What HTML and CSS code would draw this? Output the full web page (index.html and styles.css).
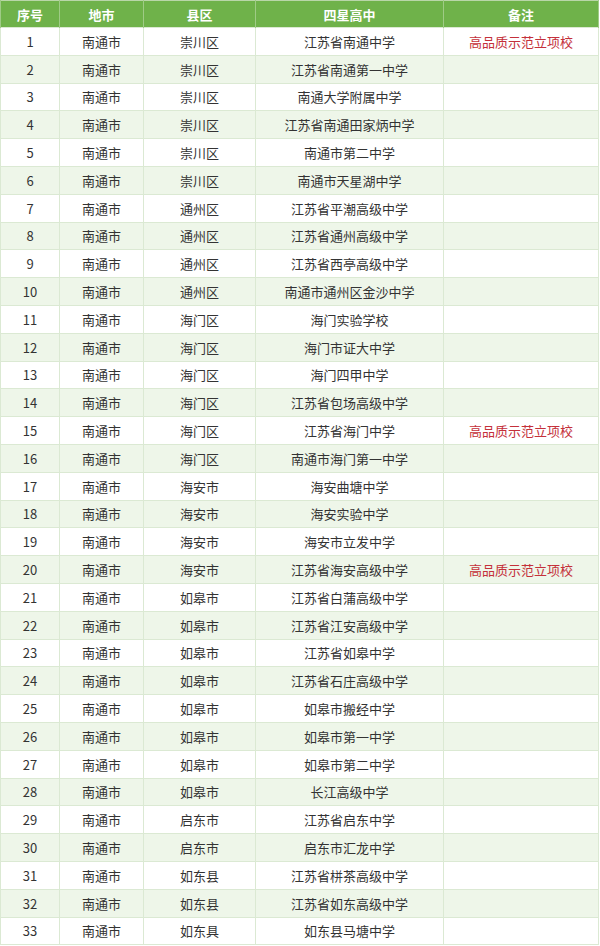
FILE: index.html
```html
<!DOCTYPE html>
<html lang="zh">
<head>
<meta charset="utf-8">
<link rel="stylesheet" href="styles.css">
</head>
<body>
<table class="schools">
<colgroup><col class="c1"><col class="c2"><col class="c3"><col class="c4"><col class="c5"></colgroup>
<thead><tr><th>序号</th><th>地市</th><th>县区</th><th>四星高中</th><th>备注</th></tr></thead>
<tbody>
<tr><td>1</td><td>南通市</td><td>崇川区</td><td>江苏省南通中学</td><td class="note">高品质示范立项校</td></tr>
<tr><td>2</td><td>南通市</td><td>崇川区</td><td>江苏省南通第一中学</td><td></td></tr>
<tr><td>3</td><td>南通市</td><td>崇川区</td><td>南通大学附属中学</td><td></td></tr>
<tr><td>4</td><td>南通市</td><td>崇川区</td><td>江苏省南通田家炳中学</td><td></td></tr>
<tr><td>5</td><td>南通市</td><td>崇川区</td><td>南通市第二中学</td><td></td></tr>
<tr><td>6</td><td>南通市</td><td>崇川区</td><td>南通市天星湖中学</td><td></td></tr>
<tr><td>7</td><td>南通市</td><td>通州区</td><td>江苏省平潮高级中学</td><td></td></tr>
<tr><td>8</td><td>南通市</td><td>通州区</td><td>江苏省通州高级中学</td><td></td></tr>
<tr><td>9</td><td>南通市</td><td>通州区</td><td>江苏省西亭高级中学</td><td></td></tr>
<tr><td>10</td><td>南通市</td><td>通州区</td><td>南通市通州区金沙中学</td><td></td></tr>
<tr><td>11</td><td>南通市</td><td>海门区</td><td>海门实验学校</td><td></td></tr>
<tr><td>12</td><td>南通市</td><td>海门区</td><td>海门市证大中学</td><td></td></tr>
<tr><td>13</td><td>南通市</td><td>海门区</td><td>海门四甲中学</td><td></td></tr>
<tr><td>14</td><td>南通市</td><td>海门区</td><td>江苏省包场高级中学</td><td></td></tr>
<tr><td>15</td><td>南通市</td><td>海门区</td><td>江苏省海门中学</td><td class="note">高品质示范立项校</td></tr>
<tr><td>16</td><td>南通市</td><td>海门区</td><td>南通市海门第一中学</td><td></td></tr>
<tr><td>17</td><td>南通市</td><td>海安市</td><td>海安曲塘中学</td><td></td></tr>
<tr><td>18</td><td>南通市</td><td>海安市</td><td>海安实验中学</td><td></td></tr>
<tr><td>19</td><td>南通市</td><td>海安市</td><td>海安市立发中学</td><td></td></tr>
<tr><td>20</td><td>南通市</td><td>海安市</td><td>江苏省海安高级中学</td><td class="note">高品质示范立项校</td></tr>
<tr><td>21</td><td>南通市</td><td>如皋市</td><td>江苏省白蒲高级中学</td><td></td></tr>
<tr><td>22</td><td>南通市</td><td>如皋市</td><td>江苏省江安高级中学</td><td></td></tr>
<tr><td>23</td><td>南通市</td><td>如皋市</td><td>江苏省如皋中学</td><td></td></tr>
<tr><td>24</td><td>南通市</td><td>如皋市</td><td>江苏省石庄高级中学</td><td></td></tr>
<tr><td>25</td><td>南通市</td><td>如皋市</td><td>如皋市搬经中学</td><td></td></tr>
<tr><td>26</td><td>南通市</td><td>如皋市</td><td>如皋市第一中学</td><td></td></tr>
<tr><td>27</td><td>南通市</td><td>如皋市</td><td>如皋市第二中学</td><td></td></tr>
<tr><td>28</td><td>南通市</td><td>如皋市</td><td>长江高级中学</td><td></td></tr>
<tr><td>29</td><td>南通市</td><td>启东市</td><td>江苏省启东中学</td><td></td></tr>
<tr><td>30</td><td>南通市</td><td>启东市</td><td>启东市汇龙中学</td><td></td></tr>
<tr><td>31</td><td>南通市</td><td>如东县</td><td>江苏省栟茶高级中学</td><td></td></tr>
<tr><td>32</td><td>南通市</td><td>如东县</td><td>江苏省如东高级中学</td><td></td></tr>
<tr><td>33</td><td>南通市</td><td>如东具</td><td>如东县马塘中学</td><td></td></tr>
</tbody>
</table>
</body>
</html>
```
FILE: styles.css
```css
html, body {
  margin: 0;
  padding: 0;
  background: #ffffff;
}
.schools {
  width: 598px;
  border-collapse: collapse;
  table-layout: fixed;
  font-family: "Noto Sans CJK SC", "Noto Sans", sans-serif;
  font-size: 13px;
  color: #333333;
  border: 1px solid #b9d6a8;
}
.c1 { width: 59px; }
.c2 { width: 84px; }
.c3 { width: 112px; }
.c4 { width: 188px; }
.c5 { width: 155px; }
.schools th {
  background: #6fb24a;
  color: #ffffff;
  font-weight: bold;
  height: 26px;
  padding: 0;
  text-align: center;
  border-left: 1px solid #9fcb86;
  border-right: 1px solid #9fcb86;
  line-height: 1;
}
.schools td {
  height: 26.8px;
  padding: 0;
  text-align: center;
  line-height: 1;
  border: 1px solid #dbe9d3;
}
.schools tbody tr:nth-child(even) td {
  background: #eef6e9;
}
.schools td.note {
  color: #c4303a;
}
```
